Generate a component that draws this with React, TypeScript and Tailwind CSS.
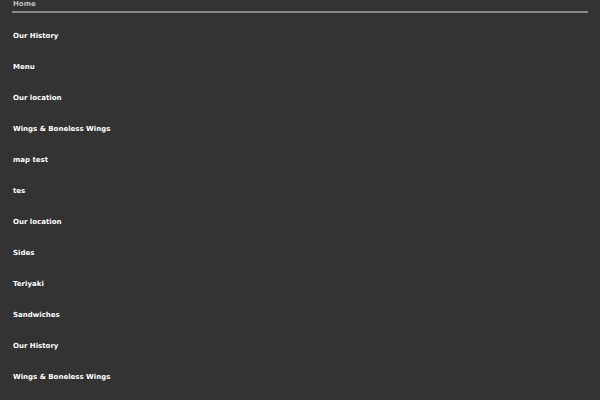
const items = [
  'Our History',
  'Menu',
  'Our location',
  'Wings & Boneless Wings',
  'map test',
  'tes',
  'Our location',
  'Sides',
  'Teriyaki',
  'Sandwiches',
  'Our History',
  'Wings & Boneless Wings',
  'Menu',
];

export default function App() {
  return (
    <div
      className="h-[400px] w-[600px] overflow-hidden bg-[#333333] px-3 text-[7px] font-bold"
      style={{ fontFamily: '"DejaVu Sans", sans-serif' }}
    >
      <div className="-mt-[2px] border-b-2 border-[#8a8a8a] pb-[1px] pl-[1px] leading-[12px] text-[#bdbdbd]">
        Home
      </div>
      <ul className="mt-[8px]">
        {items.map((item, i) => (
          <li key={i} className="flex h-[31px] items-center pl-[1px] text-white">
            {item}
          </li>
        ))}
      </ul>
    </div>
  );
}
